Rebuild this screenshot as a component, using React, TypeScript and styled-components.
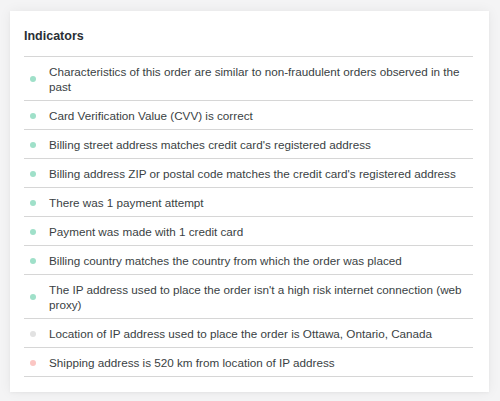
import React from "react";
import styled, { createGlobalStyle } from "styled-components";

const Global = createGlobalStyle`
  html, body { margin: 0; padding: 0; background: #f4f4f5; }
  body { font-family: "Liberation Sans", Arial, sans-serif; -webkit-font-smoothing: antialiased; }
`;

const Page = styled.div`
  width: 500px;
  height: 401px;
  box-sizing: border-box;
  padding: 11px 11px 9px 10px;
  background: #f4f4f5;
`;

const Card = styled.section`
  background: #ffffff;
  box-shadow: 0 0 12px rgba(0, 0, 0, 0.06), 0 1px 3px rgba(0, 0, 0, 0.04);
  padding: 17px 16px 16px 14px;
  box-sizing: border-box;
  height: 381px;
`;

const Title = styled.h2`
  margin: 0;
  font-size: 12.5px;
  font-weight: 700;
  color: #2a2f35;
  line-height: 16px;
  padding-bottom: 12px;
  border-bottom: 1px solid #d6d6d6;
`;

const List = styled.ul`
  list-style: none;
  margin: 0;
  padding: 0;
`;

const Row = styled.li`
  display: flex;
  align-items: center;
  gap: 13px;
  padding: 7px 0 6px 6px;
  border-bottom: 1px solid #d6d6d6;
  font-size: 11.7px;
  line-height: 15px;
  color: #3a3f44;
`;

const Dot = styled.span<{ $tone: "good" | "neutral" | "bad" }>`
  flex: none;
  width: 6px;
  height: 6px;
  border-radius: 50%;
  background: ${(p) =>
    p.$tone === "good" ? "#9fe0c9" : p.$tone === "bad" ? "#fbc6c3" : "#e2e2e2"};
`;

const Text = styled.span`
  flex: 1;
`;

const items: { tone: "good" | "neutral" | "bad"; text: string }[] = [
  { tone: "good", text: "Characteristics of this order are similar to non-fraudulent orders observed in the past" },
  { tone: "good", text: "Card Verification Value (CVV) is correct" },
  { tone: "good", text: "Billing street address matches credit card's registered address" },
  { tone: "good", text: "Billing address ZIP or postal code matches the credit card's registered address" },
  { tone: "good", text: "There was 1 payment attempt" },
  { tone: "good", text: "Payment was made with 1 credit card" },
  { tone: "good", text: "Billing country matches the country from which the order was placed" },
  { tone: "good", text: "The IP address used to place the order isn't a high risk internet connection (web proxy)" },
  { tone: "neutral", text: "Location of IP address used to place the order is Ottawa, Ontario, Canada" },
  { tone: "bad", text: "Shipping address is 520 km from location of IP address" },
];

export default function App() {
  return (
    <>
      <Global />
      <Page>
        <Card>
          <Title>Indicators</Title>
          <List>
            {items.map((it, i) => (
              <Row key={i}>
                <Dot $tone={it.tone} />
                <Text>{it.text}</Text>
              </Row>
            ))}
          </List>
        </Card>
      </Page>
    </>
  );
}
